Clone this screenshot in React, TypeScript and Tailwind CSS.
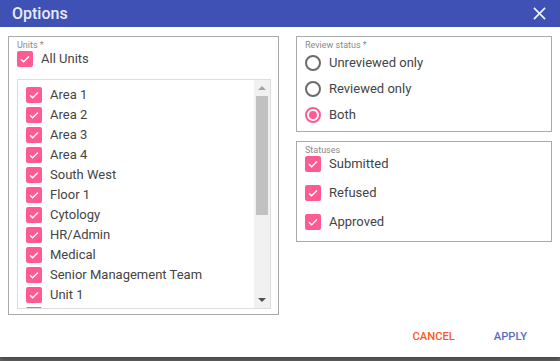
import { useState } from 'react';

const units = [
  'Area 1',
  'Area 2',
  'Area 3',
  'Area 4',
  'South West',
  'Floor 1',
  'Cytology',
  'HR/Admin',
  'Medical',
  'Senior Management Team',
  'Unit 1',
  'Unit 2',
];

function Check({ checked = true }: { checked?: boolean }) {
  return (
    <span
      className={`flex h-4 w-4 shrink-0 items-center justify-center rounded-[2px] ${
        checked ? 'bg-[#ff5a92]' : 'border-2 border-[#757575] bg-white'
      }`}
    >
      {checked && (
        <svg viewBox="0 0 16 16" className="h-4 w-4" fill="none" stroke="#fff" strokeWidth="1.4">
          <path d="M4 8.2l2.6 2.6L12 5.4" />
        </svg>
      )}
    </span>
  );
}

function Radio({ checked }: { checked: boolean }) {
  return (
    <span
      className={`flex h-4 w-4 shrink-0 items-center justify-center rounded-full border-2 ${
        checked ? 'border-[#ff5a92]' : 'border-[#6b6b6b]'
      }`}
    >
      {checked && <span className="h-2 w-2 rounded-full bg-[#ff5a92]" />}
    </span>
  );
}

export default function App() {
  const [review, setReview] = useState('both');

  return (
    <div className="h-[361px] w-[560px] overflow-hidden bg-[#666] font-['Roboto',sans-serif] text-[#444]">
      <div className="flex h-[357px] flex-col bg-white shadow-[0_2px_6px_rgba(0,0,0,0.4)]">
        {/* title bar */}
        <div className="flex h-[27px] shrink-0 items-center justify-between bg-[#3f51b5] pl-3 pr-[14px]">
          <span className="text-[16px] font-medium text-[#e8eaf6]">Options</span>
          <svg viewBox="0 0 14 14" className="h-[13px] w-[13px]" stroke="#f2f2f8" strokeWidth="1.8">
            <path d="M1 1l12 12M13 1L1 13" />
          </svg>
        </div>

        <div className="flex gap-[17px] pl-2 pt-[9px]">
          {/* units */}
          <div className="flex h-[279px] w-[271px] flex-col border border-[#aaa] pl-2 pr-[7px]">
            <div className="mt-[3px] text-[9px] leading-[10px] text-[#8a8a8a]">Units *</div>
            <label className="mt-[1px] flex h-4 items-center gap-2">
              <Check />
              <span className="text-[13px]">All Units</span>
            </label>
            <div className="mt-[12px] flex h-[230px] border border-[#ddd]">
              <div className="flex-1 overflow-hidden pl-2 pt-[5px]">
                {units.map((u) => (
                  <div key={u} className="flex h-[20px] items-center gap-2">
                    <Check />
                    <span className="text-[13px]">{u}</span>
                  </div>
                ))}
              </div>
              <div className="flex w-[16px] flex-col bg-[#f1f1f1]">
                <div className="flex h-[16px] items-center justify-center">
                  <span className="h-0 w-0 border-x-[4px] border-b-[4px] border-x-transparent border-b-[#a3a3a3]" />
                </div>
                <div className="mx-[2px] h-[119px] bg-[#c1c1c1]" />
                <div className="flex-1" />
                <div className="flex h-[16px] items-center justify-center">
                  <span className="h-0 w-0 border-x-[4px] border-t-[4px] border-x-transparent border-t-[#505050]" />
                </div>
              </div>
            </div>
          </div>

          {/* right column */}
          <div className="flex w-[256px] flex-col gap-[9px]">
            <div className="flex h-[96px] flex-col border border-[#aaa] pl-2">
              <div className="mt-[3px] text-[9px] leading-[10px] text-[#8a8a8a]">Review status *</div>
              {[
                ['unreviewed', 'Unreviewed only'],
                ['reviewed', 'Reviewed only'],
                ['both', 'Both'],
              ].map(([k, label], i) => (
                <label
                  key={k}
                  onClick={() => setReview(k)}
                  className={`flex h-4 items-center gap-2 ${i === 0 ? 'mt-[5px]' : 'mt-[10px]'}`}
                >
                  <Radio checked={review === k} />
                  <span className="text-[13px]">{label}</span>
                </label>
              ))}
            </div>

            <div className="flex h-[101px] flex-col border border-[#aaa] pl-2">
              <div className="mt-[3px] text-[9px] leading-[10px] text-[#8a8a8a]">Statuses</div>
              {['Submitted', 'Refused', 'Approved'].map((s, i) => (
                <label key={s} className={`flex h-4 items-center gap-2 ${i === 0 ? 'mt-[1px]' : 'mt-[13px]'}`}>
                  <Check />
                  <span className="text-[13px]">{s}</span>
                </label>
              ))}
            </div>
          </div>
        </div>

        {/* actions */}
        <div className="mt-auto flex h-[42px] items-center justify-end gap-[39px] pt-[2px] pr-[33px]">
          <button className="text-[11.2px] font-medium text-[#ff5722]">CANCEL</button>
          <button className="text-[11.2px] font-medium text-[#5c6bc0]">APPLY</button>
        </div>
      </div>
    </div>
  );
}
